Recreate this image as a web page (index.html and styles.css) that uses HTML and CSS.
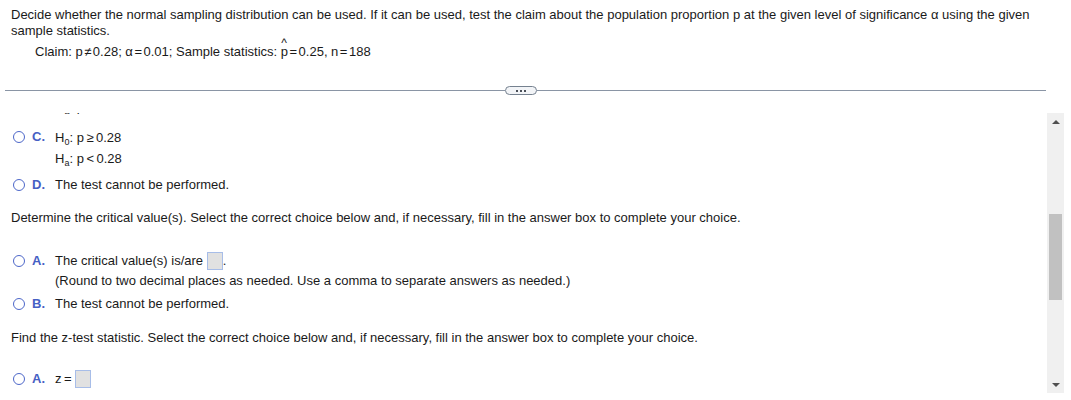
FILE: index.html
```html
<!DOCTYPE html>
<html>
<head>
<meta charset="utf-8">
<link rel="stylesheet" href="styles.css">
</head>
<body>
<div class="page">
  <div class="header">
    <p class="intro">Decide whether the normal sampling distribution can be used. If it can be used, test the claim about the population proportion p at the given level of significance α using the given sample statistics.</p>
    <p class="claim">Claim: p<span class="op">≠</span>0.28; α<span class="op">=</span>0.01; Sample statistics: <span class="phat">p</span><span class="op">=</span>0.25, n<span class="op">=</span>188</p>
  </div>
  <div class="divider">
    <div class="rule rule-left"></div>
    <div class="more"><span class="dot"></span><span class="dot"></span><span class="dot"></span></div>
    <div class="rule rule-right"></div>
  </div>
  <div class="scroller">
    <div class="content">
      <div class="inner">
        <div class="opt hyp-clipped">
          <span class="radio-slot"></span><span class="letter"></span>
          <div class="body"><div class="hline">H<sub>a</sub>: p<span class="op op-wide">&gt;</span>0.28</div></div>
        </div>
        <div class="opt opt-c">
          <span class="radio"></span><span class="letter">C.</span>
          <div class="body">
            <div class="hline">H<sub>0</sub>: p<span class="op op-wide">≥</span>0.28</div>
            <div class="hline">H<sub>a</sub>: p<span class="op op-wide">&lt;</span>0.28</div>
          </div>
        </div>
        <div class="opt opt-d">
          <span class="radio"></span><span class="letter">D.</span>
          <div class="body"><div class="line">The test cannot be performed.</div></div>
        </div>
        <p class="prompt prompt-1">Determine the critical value(s). Select the correct choice below and, if necessary, fill in the answer box to complete your choice.</p>
        <div class="opt opt-a1">
          <span class="radio"></span><span class="letter">A.</span>
          <div class="body">
            <div class="line">The critical value(s) is/are <span class="box"></span>.</div>
            <div class="line">(Round to two decimal places as needed. Use a comma to separate answers as needed.)</div>
          </div>
        </div>
        <div class="opt opt-b1">
          <span class="radio"></span><span class="letter">B.</span>
          <div class="body"><div class="line">The test cannot be performed.</div></div>
        </div>
        <p class="prompt prompt-2">Find the z-test statistic. Select the correct choice below and, if necessary, fill in the answer box to complete your choice.</p>
        <div class="opt opt-a2">
          <span class="radio"></span><span class="letter">A.</span>
          <div class="body"><div class="line">z<span class="op op-wide">=</span><span class="box box-z"></span></div></div>
        </div>
      </div>
    </div>
    <div class="scrollbar">
      <div class="arrow arrow-up"></div>
      <div class="track"><div class="thumb"></div></div>
      <div class="arrow arrow-down"></div>
    </div>
  </div>
</div>
</body>
</html>
```
FILE: styles.css
```css
html, body {
  margin: 0;
  padding: 0;
  background: #ffffff;
}
body {
  font-family: "Liberation Sans", Arial, sans-serif;
  font-size: 13px;
  color: #1a1a1a;
  width: 1071px;
  height: 400px;
  overflow: hidden;
}
.page {
  width: 1071px;
}
.header {
  padding: 7px 20px 0 11px;
}
.intro {
  margin: 0;
  line-height: 16px;
}
.claim {
  margin: 5px 0 0 0;
  padding-left: 24px;
  line-height: 16px;
}
.op {
  margin: 0 1.5px;
}
.op-wide {
  margin: 0 2.5px;
}
.phat {
  position: relative;
  display: inline-block;
}
.phat::before {
  content: "^";
  position: absolute;
  left: 0.5px;
  top: -7px;
  font-size: 12px;
  line-height: 12px;
}
.divider {
  margin: 26px 25px 0 5px;
  height: 9px;
  display: flex;
  align-items: center;
}
.rule {
  height: 1px;
  background: #8a95a5;
}
.rule-left {
  width: 500px;
}
.rule-right {
  flex: 1;
}
.more {
  width: 32px;
  height: 9px;
  box-sizing: border-box;
  border: 1px solid #75818f;
  border-radius: 5px;
  background: #f2f4f7;
  display: flex;
  align-items: center;
  justify-content: center;
  gap: 2px;
}
.dot {
  width: 2px;
  height: 2px;
  background: #4a4f58;
}
.scroller {
  margin-top: 18px;
  height: 280px;
  display: flex;
}
.content {
  flex: 1;
  overflow: hidden;
  height: 280px;
}
.inner {
  margin-top: -17px;
}
.opt {
  display: flex;
  align-items: flex-start;
  padding-left: 13px;
}
.radio, .radio-slot {
  width: 12px;
  height: 12px;
  box-sizing: border-box;
  flex: none;
  margin-top: 4px;
}
.radio {
  border: 1.4px solid #4d67c9;
  border-radius: 50%;
}
.letter {
  width: 23px;
  margin-left: 7px;
  flex: none;
  font-weight: bold;
  color: #4660c4;
  line-height: 20px;
}
.body {
  flex: 1;
}
.line {
  line-height: 20px;
  height: 20px;
}
.hline {
  line-height: 21px;
  height: 21px;
}
sub {
  font-size: 9px;
  vertical-align: -3px;
  line-height: 0;
}
.opt-c { margin-top: 10px; }
.opt-d { margin-top: 6px; }
.prompt {
  margin: 0;
  padding-left: 11px;
  line-height: 20px;
}
.prompt-1 { margin-top: 13px; }
.opt-a1 { margin-top: 23px; }
.opt-b1 { margin-top: 3px; }
.prompt-2 { margin-top: 14px; }
.opt-a2 { margin-top: 21px; }
.box {
  display: inline-block;
  width: 16px;
  height: 18px;
  box-sizing: border-box;
  border: 1px solid #a7bde8;
  background: #e1e1e1;
  vertical-align: -5px;
}
.box-z {
  margin-left: 1px;
}
.scrollbar {
  width: 17px;
  margin-right: 7px;
  height: 280px;
  background: #f0f0f0;
  display: flex;
  flex-direction: column;
  align-items: center;
}
.arrow {
  height: 17px;
  width: 17px;
  display: flex;
  align-items: center;
  justify-content: center;
  flex: none;
}
.arrow-up::before {
  content: "";
  border-left: 4px solid transparent;
  border-right: 4px solid transparent;
  border-bottom: 4px solid #505050;
}
.arrow-down::before {
  content: "";
  border-left: 4px solid transparent;
  border-right: 4px solid transparent;
  border-top: 4px solid #505050;
}
.track {
  flex: 1;
  width: 13px;
  padding-top: 84px;
}
.thumb {
  height: 86px;
  background: #c1c1c1;
}
```
